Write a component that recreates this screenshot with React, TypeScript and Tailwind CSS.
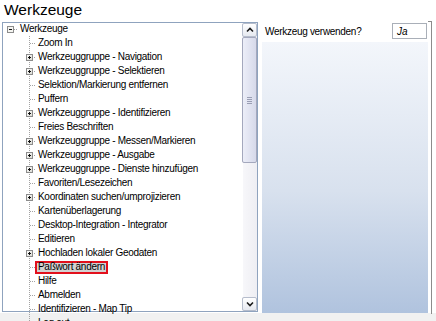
import React from "react";

type Item = { label: string; plus?: boolean; selected?: boolean };

const items: Item[] = [
  { label: "Zoom In" },
  { label: "Werkzeuggruppe - Navigation", plus: true },
  { label: "Werkzeuggruppe - Selektieren", plus: true },
  { label: "Selektion/Markierung entfernen" },
  { label: "Puffern" },
  { label: "Werkzeuggruppe - Identifizieren", plus: true },
  { label: "Freies Beschriften" },
  { label: "Werkzeuggruppe - Messen/Markieren", plus: true },
  { label: "Werkzeuggruppe - Ausgabe", plus: true },
  { label: "Werkzeuggruppe - Dienste hinzufügen", plus: true },
  { label: "Favoriten/Lesezeichen" },
  { label: "Koordinaten suchen/umprojizieren", plus: true },
  { label: "Kartenüberlagerung" },
  { label: "Desktop-Integration - Integrator" },
  { label: "Editieren" },
  { label: "Hochladen lokaler Geodaten", plus: true },
  { label: "Paßwort ändern", selected: true },
  { label: "Hilfe" },
  { label: "Abmelden" },
  { label: "Identifizieren - Map Tip" },
  { label: "Log out" },
];

function ChildConnector({ plus }: { plus?: boolean }) {
  return (
    <svg width="32" height="14" className="shrink-0">
      <line x1="26.5" y1="0" x2="26.5" y2="14" stroke="#a3a3a3" strokeDasharray="1 1" />
      <line x1="27" y1="7.5" x2="32" y2="7.5" stroke="#a3a3a3" strokeDasharray="1 1" />
      {plus && (
        <g>
          <defs>
            <linearGradient id="pb" x1="0" y1="0" x2="1" y2="1">
              <stop offset="0" stopColor="#ffffff" />
              <stop offset="1" stopColor="#d8d8d0" />
            </linearGradient>
          </defs>
          <rect x="23.5" y="4.5" width="6" height="6" fill="url(#pb)" stroke="#8c8c8c" />
          <line x1="25" y1="7.5" x2="28" y2="7.5" stroke="#111" />
          <line x1="26.5" y1="6" x2="26.5" y2="9" stroke="#111" />
        </g>
      )}
    </svg>
  );
}

function RootConnector() {
  return (
    <svg width="14" height="14" className="shrink-0">
      <rect x="4.5" y="4.5" width="6" height="6" fill="#f4f4f0" stroke="#8c8c8c" />
      <line x1="6" y1="7.5" x2="9" y2="7.5" stroke="#111" />
      <line x1="11" y1="7.5" x2="14" y2="7.5" stroke="#a3a3a3" strokeDasharray="1 1" />
    </svg>
  );
}

function Label({ text, selected }: { text: string; selected?: boolean }) {
  return (
    <span
      className={
        selected
          ? "inline-flex h-[13px] items-center whitespace-nowrap border-2 border-[#e2101c] bg-[#d2d2d2] px-[1px]"
          : "inline-flex h-[13px] items-center whitespace-nowrap border-2 border-transparent px-[1px]"
      }
    >
      {text}
    </span>
  );
}

function Chevron({ down }: { down?: boolean }) {
  return (
    <svg width="8" height="6" viewBox="0 0 8 6">
      <path
        d={down ? "M1 1.5 L4 4.5 L7 1.5" : "M1 4.5 L4 1.5 L7 4.5"}
        fill="none"
        stroke="#1a1a1a"
        strokeWidth="1.6"
      />
    </svg>
  );
}

export default function App() {
  return (
    <div
      className="relative h-[321px] w-[436px] overflow-hidden bg-[#f1f1f1] text-black"
      style={{ fontFamily: '"Liberation Sans", Arial, sans-serif' }}
    >
      <div className="h-[313px] bg-white">
        <div className="h-[22px] pl-[4px] pt-[1px] text-[15.5px] leading-[18px]">Werkzeuge</div>
        <div className="flex items-start">
          {/* tree box */}
          <div className="ml-[2px] flex h-[290px] w-[256px] border border-[#8fa3be] bg-white">
            <div className="-mt-px flex-1 overflow-x-clip text-[10px] leading-[14px] tracking-[-0.3px]">
              <div className="flex h-[14px] items-center">
                <RootConnector />
                <Label text="Werkzeuge" />
              </div>
              {items.map((it) => (
                <div key={it.label} className="flex h-[14px] items-center">
                  <ChildConnector plus={it.plus} />
                  <Label text={it.label} selected={it.selected} />
                </div>
              ))}
            </div>
            {/* scrollbar */}
            <div className="flex w-[15px] shrink-0 flex-col bg-[#f3f3f6]">
              <div className="flex h-[14px] items-center justify-center rounded-[2px] border border-[#b6bdcc] bg-gradient-to-b from-white to-[#e6e9f0]">
                <Chevron />
              </div>
              <div className="flex h-[126px] items-center justify-center rounded-[2px] border border-[#a4a8bd] bg-gradient-to-r from-[#eceef8] to-[#d6d9ea]">
                <div className="flex flex-col gap-[1px]">
                  <div className="h-px w-[5px] bg-[#9a9eb4]" />
                  <div className="h-px w-[5px] bg-[#9a9eb4]" />
                  <div className="h-px w-[5px] bg-[#9a9eb4]" />
                  <div className="h-px w-[5px] bg-[#9a9eb4]" />
                </div>
              </div>
              <div className="flex-1 border-l border-white bg-gradient-to-r from-[#f7f7fa] to-[#eeeef3]" />
              <div className="flex h-[14px] items-center justify-center rounded-[2px] border border-[#b6bdcc] bg-gradient-to-b from-white to-[#e6e9f0]">
                <Chevron down />
              </div>
            </div>
          </div>
          {/* right panel */}
          <div className="-mt-[2px] ml-[4px] flex h-[293px]">
            <div className="flex w-[166px] flex-col">
              <div className="flex h-[22px] items-center justify-between bg-white">
                <span className="pl-[3px] text-[10px] tracking-[-0.3px]">Werkzeug verwenden?</span>
                <div className="mr-px flex h-[16px] w-[35px] items-center border border-[#a9afb8] bg-white pl-[4px] text-[10px] italic">
                  Ja
                </div>
              </div>
              <div className="flex-1 bg-gradient-to-b from-[#f3f6fb] via-[#d8e1ee] via-55% to-[#b0c3de]" />
            </div>
            <div className="mt-px h-full w-[4px] border-r border-t border-[#8c8c8c]" />
          </div>
        </div>
      </div>
    </div>
  );
}
